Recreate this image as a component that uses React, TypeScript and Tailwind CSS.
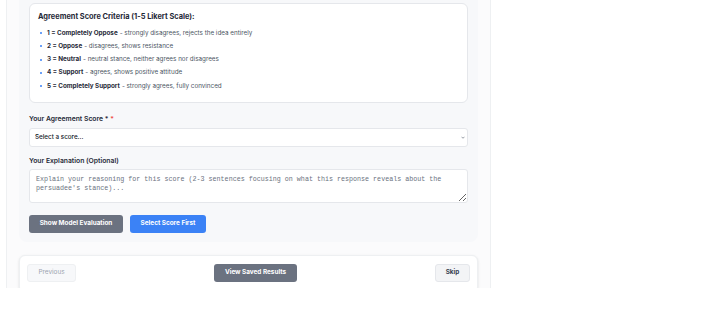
import React from 'react';

const criteria = [
  { label: '1 = Completely Oppose', text: 'strongly disagrees, rejects the idea entirely' },
  { label: '2 = Oppose', text: 'disagrees, shows resistance' },
  { label: '3 = Neutral', text: 'neutral stance, neither agrees nor disagrees' },
  { label: '4 = Support', text: 'agrees, shows positive attitude' },
  { label: '5 = Completely Support', text: 'strongly agrees, fully convinced' },
];

export default function App() {
  return (
    <div className="h-[323px] w-[718px] bg-white font-['Inter',sans-serif]">
      <div className="ml-[6px] h-[288px] w-[485px] overflow-hidden border-x border-[#eef0f2] bg-[#fbfbfc] px-[12px]">
        {/* Scoring section */}
        <div className="rounded-b-lg bg-[#f7f8fa] px-[10px] pt-[3px] pb-[9px]">
          <div className="h-[100px] rounded-md border border-[#e5e7eb] bg-white px-[8px] pt-[8px]">
            <h3 className="text-[7.4px] leading-[10px] font-bold text-[#1f2937]">
              Agreement Score Criteria (1-5 Likert Scale):
            </h3>
            <ul className="mt-[4.5px]">
              {criteria.map((c) => (
                <li key={c.label} className="flex items-center text-[6.3px] leading-[13.3px] text-[#4b5563]">
                  <span className="mr-[5px] ml-[2px] h-[2px] w-[2px] rounded-full bg-[#3b82f6]" />
                  <span className="font-bold text-[#1f2937]">{c.label}</span>
                  <span className="ml-[2px]">- {c.text}</span>
                </li>
              ))}
            </ul>
          </div>

          <label className="mt-[11px] block text-[6.8px] leading-[10px] font-semibold text-[#1f2937]">
            Your Agreement Score * <span className="text-[#ef4444]">*</span>
          </label>
          <div className="relative mt-[4px]">
            <select className="block h-[19px] w-full appearance-none rounded-[3px] border border-[#e5e7eb] bg-white px-[5px] text-[6.3px] font-medium text-[#111827]">
              <option>Select a score...</option>
              <option>1 - Completely Oppose</option>
              <option>2 - Oppose</option>
              <option>3 - Neutral</option>
              <option>4 - Support</option>
              <option>5 - Completely Support</option>
            </select>
            <svg
              className="pointer-events-none absolute top-[8px] right-[3px] h-[3px] w-[4px]"
              viewBox="0 0 8 5"
              fill="none"
              stroke="#6b7280"
              strokeWidth="1.4"
            >
              <path d="M1 1l3 3 3-3" />
            </svg>
          </div>

          <label className="mt-[9px] block text-[6.8px] leading-[10px] font-semibold text-[#1f2937]">
            Your Explanation (Optional)
          </label>
          <textarea
            className="mt-[3px] block h-[34px] w-full rounded-[3px] border border-[#e5e7eb] bg-white px-[6px] py-[5px] font-['Liberation_Mono',monospace] text-[6.7px] leading-[9px] text-[#111827] placeholder:text-[#6b7280]"
            placeholder="Explain your reasoning for this score (2-3 sentences focusing on what this response reveals about the persuadee's stance)..."
          />

          <div className="mt-[12px] flex gap-[7px]">
            <button className="h-[18px] w-[94px] rounded-[3px] bg-[#6b7280] text-[6.4px] font-bold text-white">
              Show Model Evaluation
            </button>
            <button className="h-[18px] w-[76px] rounded-[3px] bg-[#3b82f6] text-[6.4px] font-bold text-white">
              Select Score First
            </button>
          </div>
        </div>

        {/* Navigation */}
        <div className="mt-[13px] flex items-center justify-between rounded-md border border-[#eef0f2] bg-white px-[7px] pt-[8px] pb-[10px] shadow-sm">
          <button className="h-[18px] w-[49px] rounded-[3px] border border-[#eef0f2] bg-[#f7f8fa] text-[6.4px] text-[#9ca3af]">
            Previous
          </button>
          <button className="h-[18px] w-[83px] rounded-[3px] bg-[#6b7280] text-[6.4px] font-bold text-white">
            View Saved Results
          </button>
          <button className="h-[18px] w-[35px] rounded-[3px] border border-[#e5e7eb] bg-[#f3f4f6] text-[6.4px] font-bold text-[#374151]">
            Skip
          </button>
        </div>
      </div>
    </div>
  );
}
